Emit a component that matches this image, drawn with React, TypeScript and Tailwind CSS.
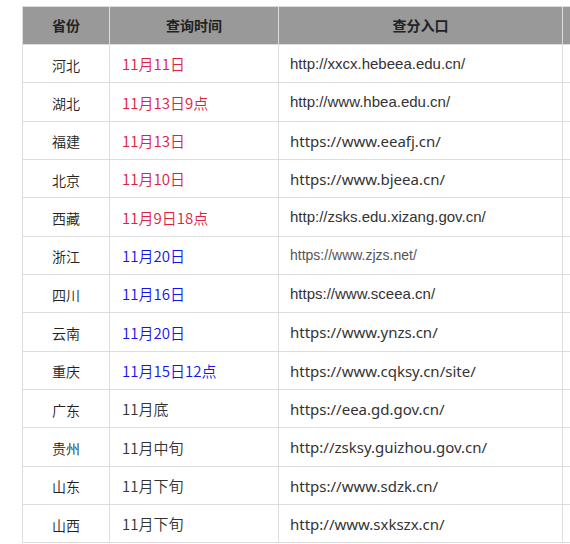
const rows = [
  { p: "河北", t: "11月11日", c: "red", u: "http://xxcx.hebeea.edu.cn/", f: "arial" },
  { p: "湖北", t: "11月13日9点", c: "red", u: "http://www.hbea.edu.cn/", f: "arial" },
  { p: "福建", t: "11月13日", c: "red", u: "https://www.eeafj.cn/", f: "wide" },
  { p: "北京", t: "11月10日", c: "red", u: "https://www.bjeea.cn/", f: "wide" },
  { p: "西藏", t: "11月9日18点", c: "red", u: "http://zsks.edu.xizang.gov.cn/", f: "arial" },
  { p: "浙江", t: "11月20日", c: "blue", u: "https://www.zjzs.net/", f: "small" },
  { p: "四川", t: "11月16日", c: "blue", u: "https://www.sceea.cn/", f: "arial" },
  { p: "云南", t: "11月20日", c: "blue", u: "https://www.ynzs.cn/", f: "wide" },
  { p: "重庆", t: "11月15日12点", c: "blue", u: "https://www.cqksy.cn/site/", f: "wide" },
  { p: "广东", t: "11月底", c: "plain", u: "https://eea.gd.gov.cn/", f: "wide" },
  { p: "贵州", t: "11月中旬", c: "plain", u: "http://zsksy.guizhou.gov.cn/", f: "wide" },
  { p: "山东", t: "11月下旬", c: "plain", u: "https://www.sdzk.cn/", f: "wide" },
  { p: "山西", t: "11月下旬", c: "plain", u: "http://www.sxkszx.cn/", f: "wide" },
];

const dateColor = {
  red: "text-[#e0203f]",
  blue: "text-[#1414f0]",
  plain: "text-[#333]",
};

const urlFont = {
  arial: "font-['Liberation_Sans',sans-serif] text-[15px] text-[#333]",
  small: "font-['Liberation_Sans',sans-serif] text-[14px] text-[#555]",
  wide: "font-['Noto_Sans',sans-serif] text-[15px] text-[#333]",
};

export default function App() {
  return (
    <div className="w-[570px] h-[544px] overflow-hidden bg-white font-['Noto_Sans_CJK_SC',sans-serif]">
      <table className="ml-[22px] mt-[6px] border-collapse table-fixed w-[660px]">
        <thead>
          <tr className="h-[38px] bg-[#999]">
            <th className="w-[87px] border border-[#ddd] text-[14px] font-bold text-[#222]">省份</th>
            <th className="w-[169px] border border-[#ddd] text-[14px] font-bold text-[#222]">查询时间</th>
            <th className="w-[284px] border border-[#ddd] text-[14px] font-bold text-[#222]">查分入口</th>
            <th className="border border-[#ddd]"></th>
          </tr>
        </thead>
        <tbody>
          {rows.map((r) => (
            <tr key={r.p} className="h-[38.33px]">
              <td className="border border-[#ddd] text-center text-[14px] font-[350] text-[#222] pt-[3px]">{r.p}</td>
              <td className={`border border-[#ddd] pl-[12px] text-[15px] font-[350] pt-[2px] ${dateColor[r.c as keyof typeof dateColor]}`}>
                {r.t}
              </td>
              <td className={`border border-[#ddd] pl-[11px] pt-[1px] ${urlFont[r.f as keyof typeof urlFont]}`}>
                {r.u}
              </td>
              <td className="border border-[#ddd]"></td>
            </tr>
          ))}
        </tbody>
      </table>
    </div>
  );
}
